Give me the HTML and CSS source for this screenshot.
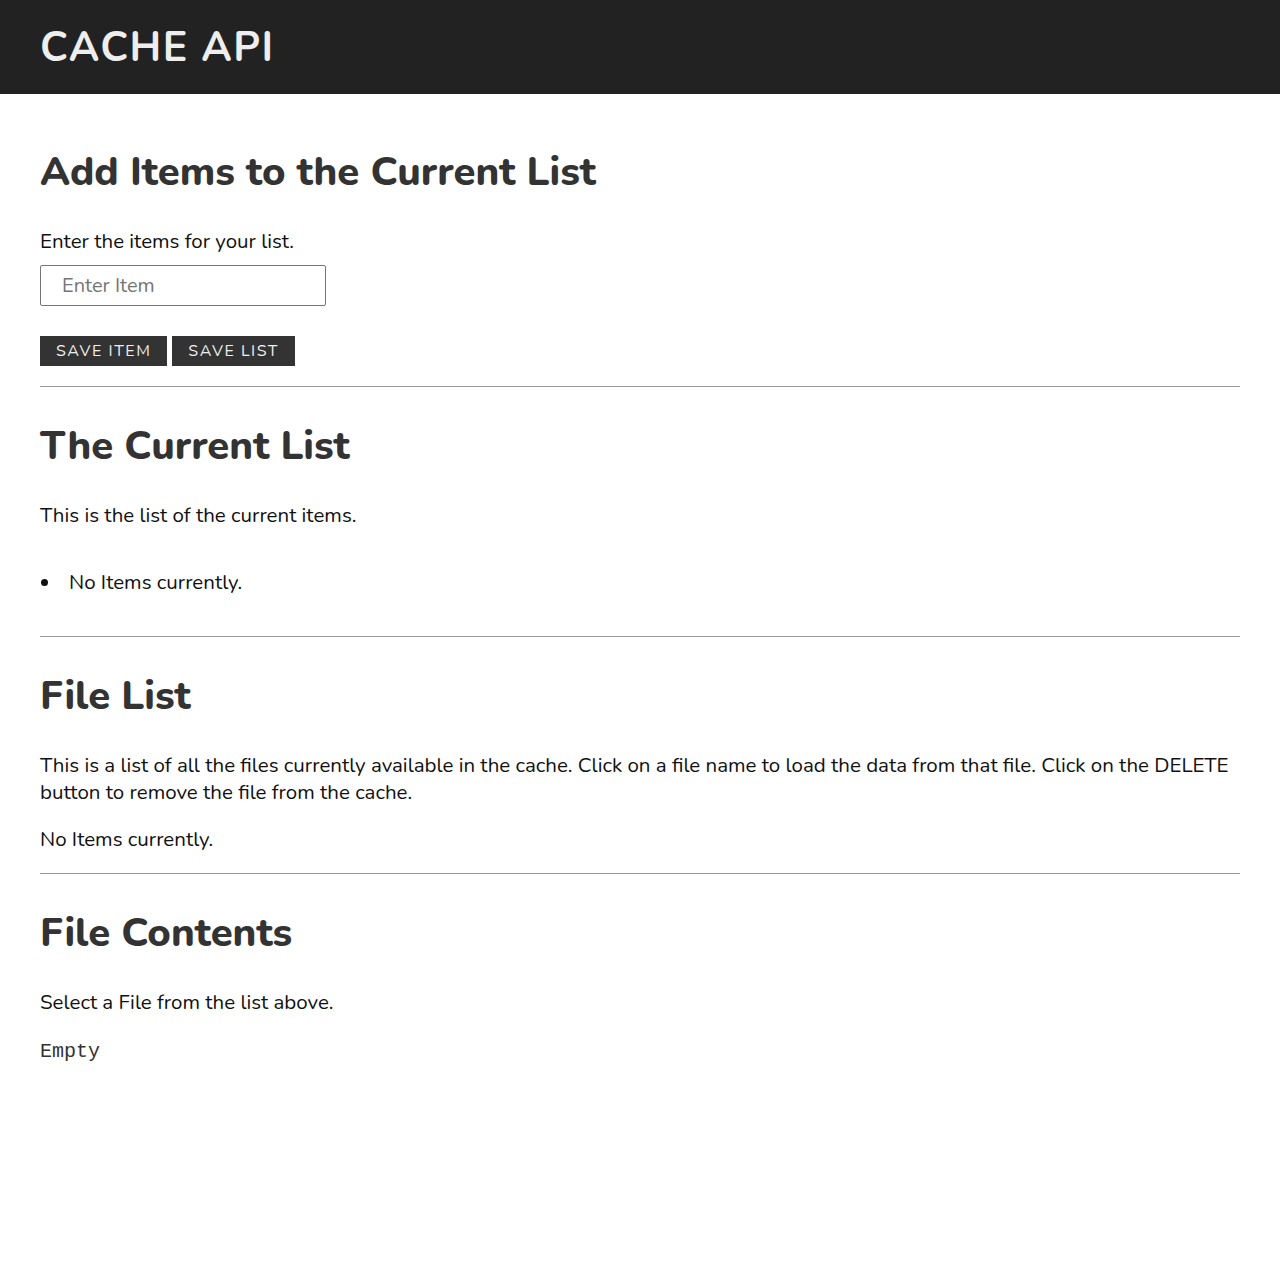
FILE: index.html
```html
<!DOCTYPE html>
<html lang="en">
<head>
<meta charset="utf-8">
<title>Cache API</title>
<link rel="stylesheet" href="styles.css">
</head>
<body>
<header class="site-header">
  <h1 class="site-title">CACHE API</h1>
</header>
<main class="content">
  <section class="section">
    <h2 class="section-title">Add Items to the Current List</h2>
    <p class="text text-tight">Enter the items for your list.</p>
    <input class="item-input" type="text" placeholder="Enter Item">
    <div class="actions">
      <button class="btn" type="button">SAVE ITEM</button>
      <button class="btn" type="button">SAVE LIST</button>
    </div>
  </section>
  <hr class="divider">
  <section class="section">
    <h2 class="section-title">The Current List</h2>
    <p class="text">This is the list of the current items.</p>
    <ul class="item-list">
      <li class="item">No Items currently.</li>
    </ul>
  </section>
  <hr class="divider">
  <section class="section">
    <h2 class="section-title">File List</h2>
    <p class="text">This is a list of all the files currently available in the cache. Click on a file name to load the data from that file. Click on the DELETE button to remove the file from the cache.</p>
    <p class="text">No Items currently.</p>
  </section>
  <hr class="divider">
  <section class="section">
    <h2 class="section-title">File Contents</h2>
    <p class="text">Select a File from the list above.</p>
    <pre class="file-contents">Empty</pre>
  </section>
</main>
</body>
</html>
```

FILE: styles.css
```css
html, body {
  margin: 0;
  padding: 0;
  background: #fff;
}

body {
  font-family: "Nunito", "Lato", "Open Sans", sans-serif;
  font-size: 20.5px;
  line-height: 27px;
  color: #111;
}

.site-header {
  background: #222;
  height: 94px;
  display: flex;
  align-items: center;
  padding: 0 40px;
}

.site-title {
  margin: 0;
  font-size: 41px;
  font-weight: 700;
  letter-spacing: 1.5px;
  color: #eee;
  line-height: 1;
}

.content {
  padding: 54px 40px 40px;
}

.section-title {
  margin: 0 0 32px;
  font-size: 40px;
  line-height: 48px;
  font-weight: 800;
  color: #333;
}

.text {
  margin: 20px 0;
}

.text-tight {
  margin-bottom: 10px;
}

.item-input {
  display: block;
  box-sizing: border-box;
  width: 286px;
  height: 41px;
  margin: 0;
  padding: 0 0 0 21px;
  border: 1px solid #767676;
  border-radius: 2px;
  font-family: inherit;
  font-size: 20px;
  color: #111;
}

.item-input::placeholder {
  color: #757575;
}

.actions {
  display: flex;
  gap: 5px;
  margin-top: 30px;
}

.btn {
  height: 30px;
  padding: 0 16px;
  border: none;
  border-radius: 0;
  background: #333;
  color: #eee;
  font-family: inherit;
  font-size: 16px;
  letter-spacing: 1.5px;
  cursor: pointer;
}

.divider {
  margin: 20px 0 35px;
  border: none;
  border-top: 1px solid #999;
  height: 0;
}

.item-list {
  margin: 40px 0;
  padding: 0;
  list-style: none;
}

.item {
  display: flex;
  align-items: center;
}

.item::before {
  content: "";
  width: 7px;
  height: 7px;
  border-radius: 50%;
  background: #111;
  margin: 0 21px 0 1px;
  flex: none;
}

.file-contents {
  margin: 22px 0 20px;
  font-family: "Courier New", "Liberation Mono", monospace;
  font-size: 20px;
  line-height: 27px;
  color: #333;
}
```
